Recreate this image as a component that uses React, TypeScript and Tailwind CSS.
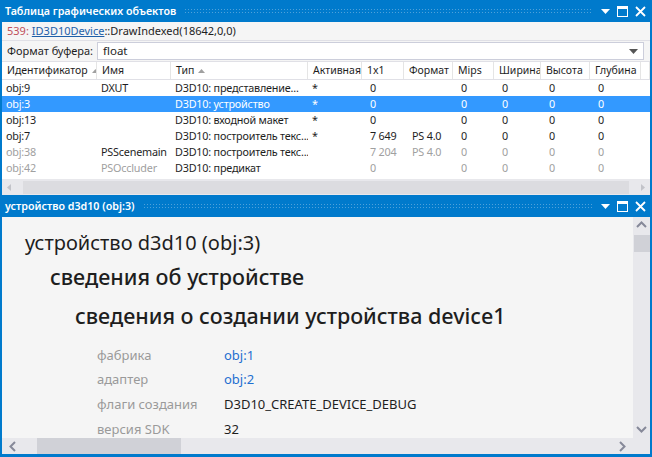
import React from "react";

const font = { fontFamily: '"Noto Sans", "Open Sans", sans-serif' };

const cols = "grid-cols-[95px_74px_137px_54px_42px_49px_41px_47px_49px_51px_1fr]";

type Cell = { t: string; g?: boolean };
type Row = { cells: Cell[]; sel?: boolean };

const rows: Row[] = [
  { cells: [{ t: "obj:9" }, { t: "DXUT" }, { t: "D3D10: представление..." }, { t: "*" }, { t: "0" }, { t: "" }, { t: "0" }, { t: "0" }, { t: "0" }, { t: "0" }] },
  { sel: true, cells: [{ t: "obj:3" }, { t: "" }, { t: "D3D10: устройство" }, { t: "*" }, { t: "0" }, { t: "" }, { t: "0" }, { t: "0" }, { t: "0" }, { t: "0" }] },
  { cells: [{ t: "obj:13" }, { t: "" }, { t: "D3D10: входной макет" }, { t: "*" }, { t: "0" }, { t: "" }, { t: "0" }, { t: "0" }, { t: "0" }, { t: "0" }] },
  { cells: [{ t: "obj:7" }, { t: "" }, { t: "D3D10: построитель текс..." }, { t: "*" }, { t: "7 649" }, { t: "PS 4.0" }, { t: "0" }, { t: "0" }, { t: "0" }, { t: "0" }] },
  { cells: [{ t: "obj:38", g: true }, { t: "PSScenemain" }, { t: "D3D10: построитель текс..." }, { t: "" }, { t: "7 204", g: true }, { t: "PS 4.0", g: true }, { t: "0", g: true }, { t: "0", g: true }, { t: "0", g: true }, { t: "0", g: true }] },
  { cells: [{ t: "obj:42", g: true }, { t: "PSOccluder", g: true }, { t: "D3D10: предикат" }, { t: "" }, { t: "0", g: true }, { t: "", g: true }, { t: "0", g: true }, { t: "0", g: true }, { t: "0", g: true }, { t: "0", g: true }] },
];

const headers = ["Идентификатор", "Имя", "Тип", "Активная", "1x1", "Формат", "Mips", "Ширина", "Высота", "Глубина", ""];

const SortUp = () => (
  <svg width="7" height="4" viewBox="0 0 7 4" className="ml-[4px] shrink-0">
    <path d="M0 4 L3.5 0 L7 4 Z" fill="#a0a0a0" />
  </svg>
);

const TitleBar = ({ title }: { title: string }) => (
  <div className="flex h-[22px] shrink-0 items-center bg-[#007acc] pl-[5px] pr-[6px] text-white">
    <span className="whitespace-nowrap text-[10.7px] font-semibold leading-none">{title}</span>
    <div className="mx-[8px] h-[6px] flex-1 bg-[radial-gradient(circle,#4ea1da_0.8px,transparent_1px)] bg-[length:3px_3px]" />
    <div className="flex items-center gap-[7px]">
      <svg width="9" height="5" viewBox="0 0 9 5">
        <path d="M0 0 H9 L4.5 5 Z" fill="#fff" />
      </svg>
      <svg width="11" height="11" viewBox="0 0 11 11">
        <rect x="0.5" y="0.5" width="10" height="10" fill="none" stroke="#fff" />
        <rect x="0" y="0" width="11" height="3" fill="#fff" />
      </svg>
      <svg width="11" height="11" viewBox="0 0 11 11">
        <path d="M1 1 L10 10 M10 1 L1 10" stroke="#fff" strokeWidth="1.8" />
      </svg>
    </div>
  </div>
);

const Props = [
  { k: "фабрика", v: "obj:1", link: true },
  { k: "адаптер", v: "obj:2", link: true },
  { k: "флаги создания", v: "D3D10_CREATE_DEVICE_DEBUG" },
  { k: "версия SDK", v: "32" },
];

export default function App() {
  return (
    <div style={font} className="flex h-[457px] w-[652px] flex-col bg-[#007acc] px-[2px] pb-[3px] text-[#1e1e1e]">
      {/* top panel */}
      <div className="-mx-[2px]">
        <TitleBar title="Таблица графических объектов" />
      </div>
      <div className="flex h-[18px] shrink-0 items-center whitespace-nowrap bg-[#f5f5f5] pl-[5px] text-[11px]">
        <span className="text-[#c0505a]">539:</span>
        <span className="ml-[3px] text-[#1e5fa8] underline">ID3D10Device</span>
        <span>::DrawIndexed(18642,0,0)</span>
      </div>
      <div className="flex h-[21px] shrink-0 items-center border-t border-[#e0e0e6] bg-[#f5f5f5] pl-[5px] pr-[6px] text-[11px]">
        <span className="w-[90px] whitespace-nowrap">Формат буфера:</span>
        <div className="flex h-[18px] flex-1 items-center justify-between border border-[#cccedb] bg-white pl-[5px] pr-[5px]">
          <span className="text-[11.5px]">float</span>
          <svg width="9" height="5" viewBox="0 0 9 5">
            <path d="M0 0 H9 L4.5 5 Z" fill="#555" />
          </svg>
        </div>
      </div>
      <div className="flex h-[118px] shrink-0 flex-col bg-white">
        <div className={`grid ${cols} h-[19px] border-y border-[#e0e0e6] bg-white text-[10.5px]`}>
          {headers.map((h, i) => (
            <div key={i} className="flex items-center overflow-hidden whitespace-nowrap border-r border-[#e5e5e5] pl-[5px] leading-none">
              <span>{h}</span>
              {(i === 0 || i === 2) && <SortUp />}
            </div>
          ))}
        </div>
        {rows.map((r, ri) => (
          <div key={ri} className={`grid ${cols} h-[16px] text-[10.8px] tracking-[-0.2px] ${r.sel ? "bg-[#3399ff] text-white" : "bg-white"}`}>
            {r.cells.map((c, ci) => (
              <div
                key={ci}
                className={`flex items-center overflow-hidden whitespace-nowrap leading-none ${ci >= 4 ? "pl-[8px]" : "pl-[4px]"} ${
                  c.g && !r.sel ? "text-[#a0a0a0]" : ""
                }`}
              >
                {c.t}
              </div>
            ))}
            <div />
          </div>
        ))}
      </div>
      <div className="flex h-[16px] shrink-0 items-center bg-[#e8e8ec] px-[5px]">
        <svg width="4" height="7" viewBox="0 0 4 7">
          <path d="M4 0 V7 L0 3.5 Z" fill="#c2c3c9" />
        </svg>
        <div className="mx-[12px] h-[13px] flex-1 bg-[#dcdce0]" />
        <svg width="4" height="7" viewBox="0 0 4 7">
          <path d="M0 0 V7 L4 3.5 Z" fill="#c2c3c9" />
        </svg>
      </div>

      {/* bottom panel */}
      <div className="-mx-[2px]">
        <TitleBar title="устройство d3d10 (obj:3)" />
      </div>
      <div className="flex min-h-0 flex-1 flex-col bg-[#f5f5f5]">
        <div className="flex min-h-0 flex-1">
          <div className="flex-1 overflow-hidden pt-[13px]">
            <div className="whitespace-nowrap pl-[23px] text-[20px] leading-[26px]">устройство d3d10 (obj:3)</div>
            <div className="mt-[8px] whitespace-nowrap pl-[48px] text-[21.5px] font-medium leading-[26px]">сведения об устройстве</div>
            <div className="mt-[13px] whitespace-nowrap pl-[73px] text-[21.5px] font-medium leading-[26px]">
              сведения о создании устройства device1
            </div>
            <div className="mt-[14px] flex flex-col pl-[95px] text-[13px]">
              {Props.map((p) => (
                <div key={p.k} className="flex h-[24.7px] items-center whitespace-nowrap">
                  <span className="w-[127px] text-[#9a9a9a]">{p.k}</span>
                  <span className={p.link ? "text-[#1e6fd0]" : ""}>{p.v}</span>
                </div>
              ))}
            </div>
          </div>
          <div className="flex w-[17px] flex-col items-center bg-[#e8e8ec]">
            <svg width="11" height="7" viewBox="0 0 11 7" className="mt-[4px]">
              <path d="M1 6 L5.5 1.5 L10 6" fill="none" stroke="#868999" strokeWidth="2" />
            </svg>
            <div className="mt-[7px] h-[17px] w-[16px] bg-[#d0d1d7]" />
            <div className="flex-1" />
            <svg width="11" height="7" viewBox="0 0 11 7" className="mb-[5px]">
              <path d="M1 1 L5.5 5.5 L10 1" fill="none" stroke="#868999" strokeWidth="2" />
            </svg>
          </div>
        </div>
        <div className="flex h-[16px] shrink-0 items-center bg-[#e8e8ec] pr-[17px]">
          <svg width="7" height="11" viewBox="0 0 7 11" className="ml-[7px]">
            <path d="M6 1 L1.5 5.5 L6 10" fill="none" stroke="#868999" strokeWidth="2" />
          </svg>
          <div className="ml-[21px] h-[16px] w-[144px] bg-[#d0d1d7]" />
          <div className="flex-1" />
          <svg width="7" height="11" viewBox="0 0 7 11" className="mr-[7px]">
            <path d="M1 1 L5.5 5.5 L1 10" fill="none" stroke="#868999" strokeWidth="2" />
          </svg>
        </div>
      </div>
    </div>
  );
}
